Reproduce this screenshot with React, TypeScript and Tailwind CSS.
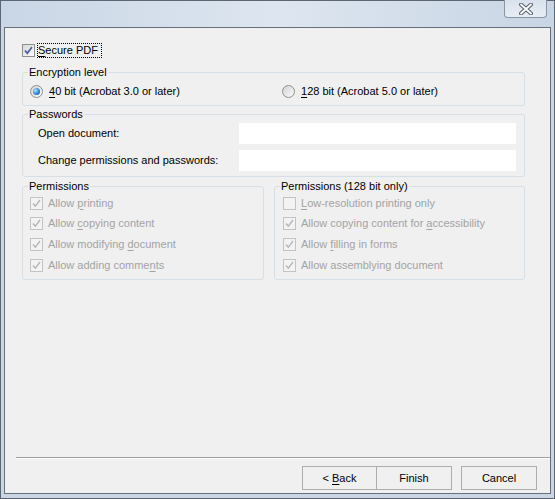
import React from 'react';
import { clsx } from 'clsx';

// Win7-style "Secure PDF" wizard page

function CheckBox({ checked, disabled }: { checked?: boolean; disabled?: boolean }) {
  return (
    <span
      className={clsx(
        'w-[13px] h-[13px] shrink-0 border flex items-center justify-center',
        disabled
          ? 'border-[#c3c3c3] bg-[#f3f3f3]'
          : 'border-[#8e8f8f] bg-gradient-to-br from-[#d9d9d9] to-[#fbfbfb]',
      )}
    >
      {checked && (
        <svg width="11" height="11" viewBox="0 0 11 11">
          <path
            d="M2 5.5 L4.3 8.2 L9 2"
            fill="none"
            stroke={disabled ? '#b4b4b4' : '#4d63a0'}
            strokeWidth={disabled ? 1.3 : 1.8}
          />
        </svg>
      )}
    </span>
  );
}

function Radio({ checked }: { checked?: boolean }) {
  return (
    <span className="w-[13px] h-[13px] shrink-0 rounded-full border border-[#8e8f8f] bg-gradient-to-br from-[#d4d4d4] to-[#fafafa] flex items-center justify-center">
      {checked && (
        <span className="w-[7px] h-[7px] rounded-full bg-[radial-gradient(circle_at_35%_35%,#b6e4ff,#2f86cf_55%,#0f4f8a)]" />
      )}
    </span>
  );
}

function Group({ title, className, children }: { title: string; className?: string; children: React.ReactNode }) {
  return (
    <fieldset className={clsx('border border-[#d5dfe5] rounded-[3px]', className)}>
      <legend className="ml-[5px] px-[1px] leading-[14px] text-black">{title}</legend>
      {children}
    </fieldset>
  );
}

const LEFT_PERMS: Array<{ pre: string; key: string; post: string }> = [
  { pre: 'Allow ', key: 'p', post: 'rinting' },
  { pre: 'Allow ', key: 'c', post: 'opying content' },
  { pre: 'Allow modifying ', key: 'd', post: 'ocument' },
  { pre: 'Allow adding comme', key: 'n', post: 'ts' },
];

const RIGHT_PERMS: Array<{ pre: string; key: string; post: string; checked: boolean }> = [
  { pre: '', key: 'L', post: 'ow-resolution printing only', checked: false },
  { pre: 'Allow copying content for ', key: 'a', post: 'ccessibility', checked: true },
  { pre: 'Allow ', key: 'f', post: 'illing in forms', checked: true },
  { pre: 'Allow assemblying document', key: '', post: '', checked: true },
];

function PermRow({ i, pre, k, post, checked }: { i: number; pre: string; k: string; post: string; checked: boolean }) {
  return (
    <div className={clsx('flex items-center gap-[5px] text-[#a3a3a3]', i === 0 ? 'h-[20px]' : 'h-[21px]')}>
      <CheckBox checked={checked} disabled />
      <span>
        {pre}
        {k && <span className="underline underline-offset-[2px]">{k}</span>}
        {post}
      </span>
    </div>
  );
}

export default function App() {
  return (
    <div className="w-[555px] h-[499px] border border-[#5d6671] bg-[#cad6e4] flex flex-col px-[3px] pb-[4px] font-['Liberation_Sans',Arial,sans-serif] text-[11px] text-black">
      {/* title bar */}
      <div className="h-[26px] shrink-0 flex justify-end bg-gradient-to-r from-[#c9d6e5] via-[#dde6f0] to-[#c8d5e4] -mx-[3px]">
        <div className="w-[43px] h-[18px] mr-[7px] -mt-px border border-[#8795a6] border-t-0 rounded-b-[4px] bg-gradient-to-b from-[#d9e2ec] to-[#e6edf5] flex items-center justify-center">
          <svg width="14" height="12" viewBox="0 0 14 12">
            <path d="M2 1.5 L12 10.5 M12 1.5 L2 10.5" stroke="#5a6472" strokeWidth="4" strokeLinecap="round" />
            <path d="M2 1.5 L12 10.5 M12 1.5 L2 10.5" stroke="#ffffff" strokeWidth="1.8" strokeLinecap="round" />
          </svg>
        </div>
      </div>

      {/* client area */}
      <div className="flex-1 border border-[#66707c] bg-[#f0f0f0] flex flex-col">
        <div className="pl-[17px] pr-[25px] pt-[15px] flex flex-col">
          <div className="h-[15px] flex items-center gap-[3px]">
            <CheckBox checked />
            <span className="pr-[3px] outline outline-1 outline-dotted outline-black leading-[13px]">
              <span className="underline underline-offset-[2px]">S</span>ecure PDF
            </span>
          </div>

          <Group title="Encryption level" className="mt-[7px] pb-[6px]">
            <div className="h-[15px] mt-[5px] flex items-center">
              <div className="w-[259px] pl-[7px] flex items-center gap-[6px]">
                <Radio checked />
                <span>
                  <span className="underline underline-offset-[2px]">4</span>0 bit (Acrobat 3.0 or later)
                </span>
              </div>
              <div className="flex items-center gap-[6px]">
                <Radio />
                <span>
                  <span className="underline underline-offset-[2px]">1</span>28 bit (Acrobat 5.0 or later)
                </span>
              </div>
            </div>
          </Group>

          <Group title="Passwords" className="mt-[1px] pb-[5px]">
            <div className="grid grid-cols-[201px_1fr] gap-y-[6px] pt-[2px] pl-[15px] pr-[8px] items-center">
              <span>Open document:</span>
              <div className="h-[21px] bg-white" />
              <span>Change permissions and passwords:</span>
              <div className="h-[21px] bg-white" />
            </div>
          </Group>

          <div className="mt-[2px] flex gap-[10px]">
            <Group title="Permissions" className="w-[242px] pb-[3px]">
              <div className="pl-[7px] flex flex-col">
                {LEFT_PERMS.map((p, i) => (
                  <PermRow key={i} i={i} pre={p.pre} k={p.key} post={p.post} checked />
                ))}
              </div>
            </Group>
            <Group title="Permissions (128 bit only)" className="flex-1 pb-[3px]">
              <div className="pl-[8px] flex flex-col">
                {RIGHT_PERMS.map((p, i) => (
                  <PermRow key={i} i={i} pre={p.pre} k={p.key} post={p.post} checked={p.checked} />
                ))}
              </div>
            </Group>
          </div>
        </div>

        <div className="flex-1" />

        {/* footer */}
        <div className="ml-[11px] border-t border-[#a0a0a0] border-b border-b-white" />
        <div className="mt-[7px] mb-[3px] mr-[13px] flex justify-end">
          <button className="w-[75px] h-[24px] border border-[#adadad] bg-[#f0f0f0] text-[11px]">
            &lt; <span className="underline underline-offset-[2px]">B</span>ack
          </button>
          <button className="w-[76px] h-[24px] -ml-px border border-[#adadad] bg-[#f0f0f0] text-[11px]">
            Finish
          </button>
          <button className="w-[76px] h-[24px] ml-[9px] border border-[#adadad] bg-[#f0f0f0] text-[11px]">
            Cancel
          </button>
        </div>
      </div>
    </div>
  );
}
